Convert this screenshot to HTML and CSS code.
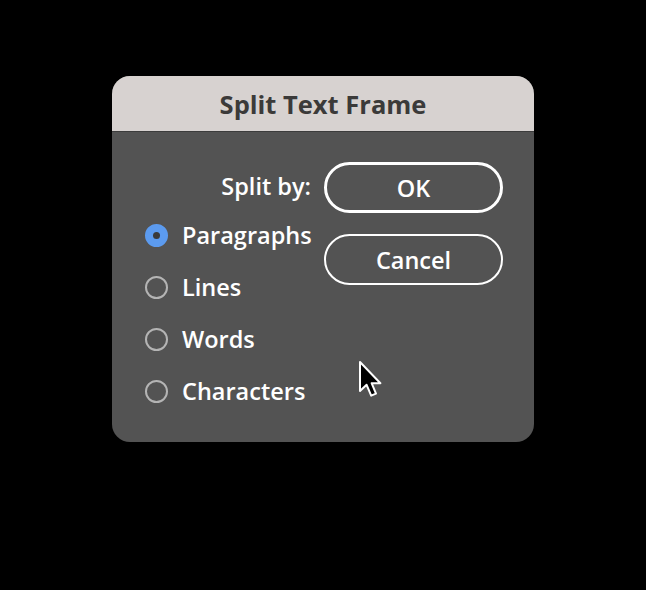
FILE: index.html
```html
<!DOCTYPE html>
<html>
<head>
<meta charset="utf-8">
<link rel="stylesheet" href="styles.css">
</head>
<body>
<div class="stage">
  <div class="dialog">
    <div class="titlebar">Split Text Frame</div>
    <div class="content">
      <div class="options">
        <div class="label">Split by:</div>
        <div class="radio checked"><span class="dot"></span><span class="rtext">Paragraphs</span></div>
        <div class="radio"><span class="dot"></span><span class="rtext">Lines</span></div>
        <div class="radio"><span class="dot"></span><span class="rtext">Words</span></div>
        <div class="radio"><span class="dot"></span><span class="rtext">Characters</span></div>
      </div>
      <div class="buttons">
        <div class="btn default">OK</div>
        <div class="btn">Cancel</div>
      </div>
    </div>
    <svg class="cursor" width="26" height="38" viewBox="0 0 13 19">
      <path d="M1 1 L1 15.5 L4.3 12.4 L6.6 17.8 L9 16.8 L6.8 11.6 L11.2 11.6 Z" fill="#000" stroke="#fff" stroke-width="1" stroke-linejoin="round"/>
    </svg>
  </div>
</div>
</body>
</html>
```
FILE: styles.css
```css
html, body {
  margin: 0;
  padding: 0;
  background: #000;
}
body {
  width: 646px;
  height: 590px;
  font-family: "Open Sans", "Liberation Sans", sans-serif;
}
.stage {
  padding: 76px 0 0 112px;
}
.dialog {
  position: relative;
  width: 422px;
  height: 366px;
  border-radius: 18px;
  background: #535353;
  overflow: hidden;
  display: flex;
  flex-direction: column;
}
.titlebar {
  height: 55px;
  background: #d7d2d0;
  border-bottom: 1px solid #3c3c3c;
  display: flex;
  align-items: center;
  justify-content: center;
  font-weight: 700;
  font-size: 25.5px;
  color: #3b3a39;
}
.content {
  display: flex;
  padding: 30px 31px 0 33px;
  gap: 13px;
}
.options {
  width: 166px;
  display: flex;
  flex-direction: column;
}
.label {
  height: 47px;
  display: flex;
  align-items: center;
  justify-content: flex-end;
  color: #fff;
  font-size: 23.5px;
  font-weight: 600;
}
.radio {
  height: 52px;
  display: flex;
  align-items: center;
  gap: 14px;
  color: #fff;
  font-size: 23.5px;
  font-weight: 600;
  white-space: nowrap;
}
.dot {
  width: 19px;
  height: 19px;
  border: 2px solid #b4b4b4;
  border-radius: 50%;
  flex: none;
  position: relative;
}
.radio.checked .dot {
  background: #5c9bef;
  border-color: #5c9bef;
}
.radio.checked .dot::after {
  content: "";
  position: absolute;
  left: 6px;
  top: 6px;
  width: 7px;
  height: 7px;
  border-radius: 50%;
  background: #3a3a3a;
}
.buttons {
  width: 179px;
  display: flex;
  flex-direction: column;
  gap: 21px;
}
.btn {
  height: 47px;
  border: 2px solid #fff;
  border-radius: 26px;
  display: flex;
  align-items: center;
  justify-content: center;
  color: #fff;
  font-size: 23.5px;
  font-weight: 600;
}
.btn.default {
  border-width: 3px;
  height: 45px;
}
.cursor {
  position: absolute;
  left: 246px;
  top: 284px;
}
```
